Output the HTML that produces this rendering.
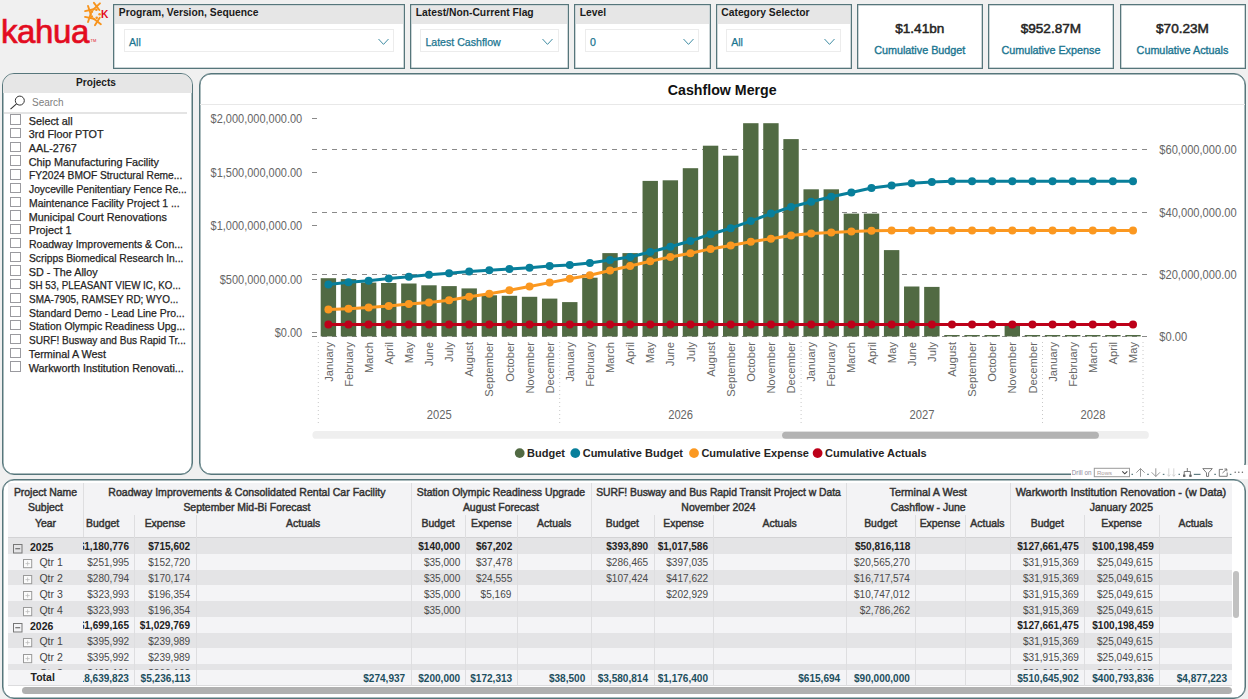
<!DOCTYPE html>
<html><head><meta charset="utf-8"><style>
*{box-sizing:border-box;margin:0;padding:0}
html,body{width:1248px;height:699px;overflow:hidden;background:#f0f0f0;font-family:"Liberation Sans", sans-serif;position:relative}
.slicer{position:absolute;top:4px;height:64.5px;background:#fff;border:1px solid #56767b;box-shadow:inset 0 0 0 0.5px rgba(86,118,123,0.6)}
.sh{position:absolute;left:1px;right:1px;top:1px;height:18px;background:#e6e6e6;font-weight:bold;font-size:10.3px;color:#1b1b1b;padding-left:3.8px;line-height:14px;white-space:nowrap}
.dd{position:absolute;top:23.8px;height:23px;border:1px solid #ececec;background:#fff}
.dd span{position:absolute;left:4px;top:6px;font-size:10.6px;color:#1a7590;line-height:12px;white-space:nowrap;-webkit-text-stroke:0.25px currentColor;}
.chev{position:absolute;right:4.5px;top:8px}
.card{position:absolute;top:3.8px;height:65px;background:#fff;border:1px solid #56767b;box-shadow:inset 0 0 0 0.5px rgba(86,118,123,0.6);text-align:center}
.cv{position:absolute;left:0;right:0;top:16.5px;font-size:13.6px;color:#252423;line-height:15px;-webkit-text-stroke:0.5px #252423}
.cl{position:absolute;left:0;right:0;top:39.5px;font-size:10.8px;color:#1a7590;line-height:13px;white-space:nowrap;-webkit-text-stroke:0.35px #1a7590}
.panel{position:absolute;background:#fff;border:1px solid #56767b;box-shadow:inset 0 0 0 0.5px #56767b;border-radius:12px;overflow:hidden}
.pi{position:absolute;left:7px;height:14px;width:181px;white-space:nowrap}
.pi i{position:absolute;left:0px;top:-0.3px;width:10.6px;height:10.4px;border:1px solid #9a9a9f;background:#fff}
.pi span{position:absolute;left:18.8px;top:0px;font-size:10.8px;line-height:13px;color:#252423;-webkit-text-stroke:0.25px currentColor;}
.rh{position:absolute;font-size:10.5px;line-height:16px;white-space:nowrap}
.cell{position:absolute;height:16px;overflow:hidden}
.cell span{position:absolute;right:5.5px;top:0.5px;font-size:10.6px;line-height:16px;white-space:nowrap;transform:scaleX(0.95);transform-origin:100% 50%}
.hd{position:absolute;text-align:center;font-size:10.45px;color:#333;line-height:12px;white-space:nowrap;overflow:hidden;-webkit-text-stroke:0.45px #333}
</style></head><body>
<div style="position:absolute;left:1px;top:12.2px;font-size:33px;color:#e30b20;letter-spacing:-0.4px;line-height:40px;-webkit-text-stroke:0.7px #e30b20">kahua</div>
<div style="position:absolute;left:90.5px;top:38px;font-size:4px;color:#e30b20;line-height:5px">TM</div>
<svg width="112" height="30" style="position:absolute;left:0;top:0"><circle cx="91.93" cy="11.65" r="1.3" fill="#f7941d"/><circle cx="96.37" cy="9.82" r="1.3" fill="#f7941d"/><circle cx="99.60" cy="14.19" r="1.3" fill="#f7941d"/><circle cx="96.68" cy="17.84" r="1.3" fill="#f7941d"/><circle cx="91.76" cy="16.45" r="1.3" fill="#f7941d"/><line x1="90.81" y1="14.48" x2="88.03" y2="5.92" stroke="#f7941d" stroke-width="1.9" stroke-linecap="round"/><line x1="93.82" y1="9.26" x2="85.02" y2="11.14" stroke="#f7941d" stroke-width="1.9" stroke-linecap="round"/><line x1="93.37" y1="9.50" x2="99.95" y2="3.36" stroke="#f7941d" stroke-width="1.9" stroke-linecap="round"/><line x1="99.37" y1="10.02" x2="93.95" y2="2.84" stroke="#f7941d" stroke-width="1.9" stroke-linecap="round"/><line x1="99.70" y1="17.67" x2="94.94" y2="25.30" stroke="#f7941d" stroke-width="1.9" stroke-linecap="round"/><line x1="93.77" y1="18.71" x2="100.87" y2="24.26" stroke="#f7941d" stroke-width="1.9" stroke-linecap="round"/><line x1="93.82" y1="18.74" x2="85.02" y2="16.86" stroke="#f7941d" stroke-width="1.9" stroke-linecap="round"/><line x1="90.81" y1="13.52" x2="88.03" y2="22.08" stroke="#f7941d" stroke-width="1.9" stroke-linecap="round"/><text x="101" y="18" font-size="10.2" font-weight="bold" fill="#e30b20" font-family='"Liberation Sans", sans-serif'>K</text></svg>
<div class="slicer" style="left:113px;width:291.5px">
<div class="sh">Program, Version, Sequence</div>
<div class="dd" style="left:10px;width:270px"><span>All</span>
<svg class="chev" width="11" height="8" viewBox="0 0 11 8"><polyline points="0.5,1 5.5,6.4 10.5,1" fill="none" stroke="#3f8ca3" stroke-width="1"/></svg></div>
</div>
<div class="slicer" style="left:410px;width:159px">
<div class="sh">Latest/Non-Current Flag</div>
<div class="dd" style="left:9.399999999999977px;width:138.39999999999998px"><span>Latest Cashflow</span>
<svg class="chev" width="11" height="8" viewBox="0 0 11 8"><polyline points="0.5,1 5.5,6.4 10.5,1" fill="none" stroke="#3f8ca3" stroke-width="1"/></svg></div>
</div>
<div class="slicer" style="left:574px;width:136.5px">
<div class="sh">Level</div>
<div class="dd" style="left:10px;width:114.29999999999995px"><span>0</span>
<svg class="chev" width="11" height="8" viewBox="0 0 11 8"><polyline points="0.5,1 5.5,6.4 10.5,1" fill="none" stroke="#3f8ca3" stroke-width="1"/></svg></div>
</div>
<div class="slicer" style="left:715.5px;width:136.0px">
<div class="sh">Category Selector</div>
<div class="dd" style="left:9.700000000000045px;width:114.39999999999998px"><span>All</span>
<svg class="chev" width="11" height="8" viewBox="0 0 11 8"><polyline points="0.5,1 5.5,6.4 10.5,1" fill="none" stroke="#3f8ca3" stroke-width="1"/></svg></div>
</div>
<div class="card" style="left:857px;width:125.5px"><div class="cv">$1.41bn</div><div class="cl">Cumulative Budget</div></div>
<div class="card" style="left:988px;width:125.79999999999995px"><div class="cv">$952.87M</div><div class="cl">Cumulative Expense</div></div>
<div class="card" style="left:1119.5px;width:126.0px"><div class="cv">$70.23M</div><div class="cl">Cumulative Actuals</div></div>
<div class="panel" style="left:2px;top:73px;width:191px;height:402px">
 <div style="position:absolute;left:0;right:0;top:0;height:19px;background:#e6e6e6;text-align:center;font-weight:bold;font-size:10.1px;line-height:17px;color:#1b1b1b;padding-right:3px">Projects</div>
 <div style="position:absolute;left:0.5px;right:5px;top:38.2px;height:2px;background:#e4e4e4"></div>
 <div style="position:absolute;left:29px;top:23.3px;font-size:10px;color:#808080;line-height:12px">Search</div>
 <svg style="position:absolute;left:6px;top:20.5px" width="17" height="15" viewBox="0 0 17 15"><circle cx="10.8" cy="5.6" r="4.5" fill="none" stroke="#333" stroke-width="1"/><line x1="7.5" y1="8.8" x2="1.5" y2="14.2" stroke="#333" stroke-width="1.1"/></svg>
 <div class="pi" style="top:40.60px"><i></i><span style="transform:scaleX(1);transform-origin:0 50%">Select all</span></div><div class="pi" style="top:54.32px"><i></i><span style="transform:scaleX(1);transform-origin:0 50%">3rd Floor PTOT</span></div><div class="pi" style="top:68.04px"><i></i><span style="transform:scaleX(1);transform-origin:0 50%">AAL-2767</span></div><div class="pi" style="top:81.76px"><i></i><span style="transform:scaleX(1);transform-origin:0 50%">Chip Manufacturing Facility</span></div><div class="pi" style="top:95.48px"><i></i><span style="transform:scaleX(0.946);transform-origin:0 50%">FY2024 BMOF Structural Reme...</span></div><div class="pi" style="top:109.20px"><i></i><span style="transform:scaleX(0.952);transform-origin:0 50%">Joyceville Penitentiary Fence Re...</span></div><div class="pi" style="top:122.92px"><i></i><span style="transform:scaleX(0.965);transform-origin:0 50%">Maintenance Facility Project 1 ...</span></div><div class="pi" style="top:136.64px"><i></i><span style="transform:scaleX(1);transform-origin:0 50%">Municipal Court Renovations</span></div><div class="pi" style="top:150.36px"><i></i><span style="transform:scaleX(1);transform-origin:0 50%">Project 1</span></div><div class="pi" style="top:164.08px"><i></i><span style="transform:scaleX(0.972);transform-origin:0 50%">Roadway Improvements &amp; Con...</span></div><div class="pi" style="top:177.80px"><i></i><span style="transform:scaleX(0.953);transform-origin:0 50%">Scripps Biomedical Research In...</span></div><div class="pi" style="top:191.52px"><i></i><span style="transform:scaleX(1);transform-origin:0 50%">SD - The Alloy</span></div><div class="pi" style="top:205.24px"><i></i><span style="transform:scaleX(0.907);transform-origin:0 50%">SH 53, PLEASANT VIEW IC, KO...</span></div><div class="pi" style="top:218.96px"><i></i><span style="transform:scaleX(0.922);transform-origin:0 50%">SMA-7905, RAMSEY RD; WYO...</span></div><div class="pi" style="top:232.68px"><i></i><span style="transform:scaleX(0.964);transform-origin:0 50%">Standard Demo - Lead Line Pro...</span></div><div class="pi" style="top:246.40px"><i></i><span style="transform:scaleX(0.967);transform-origin:0 50%">Station Olympic Readiness Upg...</span></div><div class="pi" style="top:260.12px"><i></i><span style="transform:scaleX(0.933);transform-origin:0 50%">SURF! Busway and Bus Rapid Tr...</span></div><div class="pi" style="top:273.84px"><i></i><span style="transform:scaleX(1);transform-origin:0 50%">Terminal A West</span></div><div class="pi" style="top:287.56px"><i></i><span style="transform:scaleX(1.0);transform-origin:0 50%">Warkworth Institution Renovati...</span></div>
</div>
<div class="panel" style="left:199px;top:73px;width:1046.5px;height:401.5px">
 <div style="position:absolute;left:0;right:0;top:29.5px;height:1.5px;background:#e8e8e8"></div>
 <div style="position:absolute;left:0;right:0;top:8.3px;text-align:center;font-weight:bold;font-size:14.2px;color:#111;line-height:16px">Cashflow Merge</div>
</div>
<svg width="1248" height="699" style="position:absolute;left:0;top:0" font-family='"Liberation Sans", sans-serif'><line x1="312" y1="149.5" x2="1150" y2="149.5" stroke="#8a8a8a" stroke-width="1" stroke-dasharray="5,5"/><line x1="312" y1="212.5" x2="1150" y2="212.5" stroke="#8a8a8a" stroke-width="1" stroke-dasharray="5,5"/><line x1="312" y1="274.5" x2="1150" y2="274.5" stroke="#8a8a8a" stroke-width="1" stroke-dasharray="5,5"/><line x1="312" y1="336.5" x2="1150" y2="336.5" stroke="#8a8a8a" stroke-width="1" stroke-dasharray="5,5"/><line x1="312" y1="118.5" x2="317" y2="118.5" stroke="#8a8a8a" stroke-width="1"/><line x1="312" y1="172.5" x2="317" y2="172.5" stroke="#8a8a8a" stroke-width="1"/><line x1="312" y1="225.5" x2="317" y2="225.5" stroke="#8a8a8a" stroke-width="1"/><line x1="312" y1="279.5" x2="317" y2="279.5" stroke="#8a8a8a" stroke-width="1"/><line x1="312" y1="332.5" x2="317" y2="332.5" stroke="#8a8a8a" stroke-width="1"/><rect x="320.70" y="278.20" width="15.4" height="58.20" fill="#516a43"/><rect x="340.81" y="279.10" width="15.4" height="57.30" fill="#516a43"/><rect x="360.93" y="282.60" width="15.4" height="53.80" fill="#516a43"/><rect x="381.05" y="283.00" width="15.4" height="53.40" fill="#516a43"/><rect x="401.16" y="283.50" width="15.4" height="52.90" fill="#516a43"/><rect x="421.27" y="285.30" width="15.4" height="51.10" fill="#516a43"/><rect x="441.39" y="286.10" width="15.4" height="50.30" fill="#516a43"/><rect x="461.50" y="288.40" width="15.4" height="48.00" fill="#516a43"/><rect x="481.62" y="295.30" width="15.4" height="41.10" fill="#516a43"/><rect x="501.73" y="295.80" width="15.4" height="40.60" fill="#516a43"/><rect x="521.85" y="296.80" width="15.4" height="39.60" fill="#516a43"/><rect x="541.96" y="298.60" width="15.4" height="37.80" fill="#516a43"/><rect x="562.08" y="302.10" width="15.4" height="34.30" fill="#516a43"/><rect x="582.19" y="277.70" width="15.4" height="58.70" fill="#516a43"/><rect x="602.31" y="253.10" width="15.4" height="83.30" fill="#516a43"/><rect x="622.42" y="253.10" width="15.4" height="83.30" fill="#516a43"/><rect x="642.54" y="180.90" width="15.4" height="155.50" fill="#516a43"/><rect x="662.65" y="180.30" width="15.4" height="156.10" fill="#516a43"/><rect x="682.77" y="168.20" width="15.4" height="168.20" fill="#516a43"/><rect x="702.88" y="145.70" width="15.4" height="190.70" fill="#516a43"/><rect x="723.00" y="155.70" width="15.4" height="180.70" fill="#516a43"/><rect x="743.11" y="123.20" width="15.4" height="213.20" fill="#516a43"/><rect x="763.23" y="123.20" width="15.4" height="213.20" fill="#516a43"/><rect x="783.34" y="139.10" width="15.4" height="197.30" fill="#516a43"/><rect x="803.46" y="189.30" width="15.4" height="147.10" fill="#516a43"/><rect x="823.57" y="189.30" width="15.4" height="147.10" fill="#516a43"/><rect x="843.69" y="213.60" width="15.4" height="122.80" fill="#516a43"/><rect x="863.80" y="213.60" width="15.4" height="122.80" fill="#516a43"/><rect x="883.92" y="250.10" width="15.4" height="86.30" fill="#516a43"/><rect x="904.03" y="286.50" width="15.4" height="49.90" fill="#516a43"/><rect x="924.15" y="286.90" width="15.4" height="49.50" fill="#516a43"/><rect x="944.26" y="335.00" width="15.4" height="1.40" fill="#516a43"/><rect x="964.38" y="335.00" width="15.4" height="1.40" fill="#516a43"/><rect x="984.49" y="335.00" width="15.4" height="1.40" fill="#516a43"/><rect x="1004.61" y="323.50" width="15.4" height="12.90" fill="#516a43"/><rect x="1024.72" y="335.00" width="15.4" height="1.40" fill="#516a43"/><rect x="1044.84" y="335.00" width="15.4" height="1.40" fill="#516a43"/><rect x="1064.95" y="335.00" width="15.4" height="1.40" fill="#516a43"/><rect x="1085.07" y="335.00" width="15.4" height="1.40" fill="#516a43"/><rect x="1105.18" y="335.00" width="15.4" height="1.40" fill="#516a43"/><rect x="1125.30" y="335.00" width="15.4" height="1.40" fill="#516a43"/><polyline points="328.40,284.40 348.51,282.30 368.63,280.80 388.75,278.60 408.86,276.80 428.97,274.70 449.09,273.30 469.20,271.50 489.32,270.30 509.43,269.00 529.55,267.70 549.66,266.10 569.78,265.10 589.89,263.10 610.01,260.10 630.12,257.00 650.24,252.00 670.36,246.70 690.47,241.00 710.58,234.20 730.70,228.20 750.81,221.10 770.93,213.60 791.04,207.00 811.16,201.70 831.27,196.70 851.39,192.50 871.50,188.00 891.62,185.40 911.73,183.20 931.85,181.90 951.96,181.20 972.08,181.20 992.19,181.20 1012.31,181.20 1032.42,181.20 1052.54,181.20 1072.65,181.20 1092.77,181.20 1112.88,181.20 1133.00,181.20" fill="none" stroke="#087f9b" stroke-width="3" stroke-linejoin="round"/><circle cx="328.40" cy="284.40" r="4" fill="#087f9b"/><circle cx="348.51" cy="282.30" r="4" fill="#087f9b"/><circle cx="368.63" cy="280.80" r="4" fill="#087f9b"/><circle cx="388.75" cy="278.60" r="4" fill="#087f9b"/><circle cx="408.86" cy="276.80" r="4" fill="#087f9b"/><circle cx="428.97" cy="274.70" r="4" fill="#087f9b"/><circle cx="449.09" cy="273.30" r="4" fill="#087f9b"/><circle cx="469.20" cy="271.50" r="4" fill="#087f9b"/><circle cx="489.32" cy="270.30" r="4" fill="#087f9b"/><circle cx="509.43" cy="269.00" r="4" fill="#087f9b"/><circle cx="529.55" cy="267.70" r="4" fill="#087f9b"/><circle cx="549.66" cy="266.10" r="4" fill="#087f9b"/><circle cx="569.78" cy="265.10" r="4" fill="#087f9b"/><circle cx="589.89" cy="263.10" r="4" fill="#087f9b"/><circle cx="610.01" cy="260.10" r="4" fill="#087f9b"/><circle cx="630.12" cy="257.00" r="4" fill="#087f9b"/><circle cx="650.24" cy="252.00" r="4" fill="#087f9b"/><circle cx="670.36" cy="246.70" r="4" fill="#087f9b"/><circle cx="690.47" cy="241.00" r="4" fill="#087f9b"/><circle cx="710.58" cy="234.20" r="4" fill="#087f9b"/><circle cx="730.70" cy="228.20" r="4" fill="#087f9b"/><circle cx="750.81" cy="221.10" r="4" fill="#087f9b"/><circle cx="770.93" cy="213.60" r="4" fill="#087f9b"/><circle cx="791.04" cy="207.00" r="4" fill="#087f9b"/><circle cx="811.16" cy="201.70" r="4" fill="#087f9b"/><circle cx="831.27" cy="196.70" r="4" fill="#087f9b"/><circle cx="851.39" cy="192.50" r="4" fill="#087f9b"/><circle cx="871.50" cy="188.00" r="4" fill="#087f9b"/><circle cx="891.62" cy="185.40" r="4" fill="#087f9b"/><circle cx="911.73" cy="183.20" r="4" fill="#087f9b"/><circle cx="931.85" cy="181.90" r="4" fill="#087f9b"/><circle cx="951.96" cy="181.20" r="4" fill="#087f9b"/><circle cx="972.08" cy="181.20" r="4" fill="#087f9b"/><circle cx="992.19" cy="181.20" r="4" fill="#087f9b"/><circle cx="1012.31" cy="181.20" r="4" fill="#087f9b"/><circle cx="1032.42" cy="181.20" r="4" fill="#087f9b"/><circle cx="1052.54" cy="181.20" r="4" fill="#087f9b"/><circle cx="1072.65" cy="181.20" r="4" fill="#087f9b"/><circle cx="1092.77" cy="181.20" r="4" fill="#087f9b"/><circle cx="1112.88" cy="181.20" r="4" fill="#087f9b"/><circle cx="1133.00" cy="181.20" r="4" fill="#087f9b"/><polyline points="328.40,309.60 348.51,308.70 368.63,307.60 388.75,306.10 408.86,304.10 428.97,302.40 449.09,300.20 469.20,296.70 489.32,293.70 509.43,290.20 529.55,286.60 549.66,282.60 569.78,278.80 589.89,275.20 610.01,270.50 630.12,266.00 650.24,261.30 670.36,256.90 690.47,253.20 710.58,248.90 730.70,245.40 750.81,241.70 770.93,238.80 791.04,235.60 811.16,233.50 831.27,232.40 851.39,231.60 871.50,230.80 891.62,230.40 911.73,230.40 931.85,230.40 951.96,230.40 972.08,230.40 992.19,230.40 1012.31,230.40 1032.42,230.40 1052.54,230.40 1072.65,230.40 1092.77,230.40 1112.88,230.40 1133.00,230.40" fill="none" stroke="#fb9820" stroke-width="3" stroke-linejoin="round"/><circle cx="328.40" cy="309.60" r="4" fill="#fb9820"/><circle cx="348.51" cy="308.70" r="4" fill="#fb9820"/><circle cx="368.63" cy="307.60" r="4" fill="#fb9820"/><circle cx="388.75" cy="306.10" r="4" fill="#fb9820"/><circle cx="408.86" cy="304.10" r="4" fill="#fb9820"/><circle cx="428.97" cy="302.40" r="4" fill="#fb9820"/><circle cx="449.09" cy="300.20" r="4" fill="#fb9820"/><circle cx="469.20" cy="296.70" r="4" fill="#fb9820"/><circle cx="489.32" cy="293.70" r="4" fill="#fb9820"/><circle cx="509.43" cy="290.20" r="4" fill="#fb9820"/><circle cx="529.55" cy="286.60" r="4" fill="#fb9820"/><circle cx="549.66" cy="282.60" r="4" fill="#fb9820"/><circle cx="569.78" cy="278.80" r="4" fill="#fb9820"/><circle cx="589.89" cy="275.20" r="4" fill="#fb9820"/><circle cx="610.01" cy="270.50" r="4" fill="#fb9820"/><circle cx="630.12" cy="266.00" r="4" fill="#fb9820"/><circle cx="650.24" cy="261.30" r="4" fill="#fb9820"/><circle cx="670.36" cy="256.90" r="4" fill="#fb9820"/><circle cx="690.47" cy="253.20" r="4" fill="#fb9820"/><circle cx="710.58" cy="248.90" r="4" fill="#fb9820"/><circle cx="730.70" cy="245.40" r="4" fill="#fb9820"/><circle cx="750.81" cy="241.70" r="4" fill="#fb9820"/><circle cx="770.93" cy="238.80" r="4" fill="#fb9820"/><circle cx="791.04" cy="235.60" r="4" fill="#fb9820"/><circle cx="811.16" cy="233.50" r="4" fill="#fb9820"/><circle cx="831.27" cy="232.40" r="4" fill="#fb9820"/><circle cx="851.39" cy="231.60" r="4" fill="#fb9820"/><circle cx="871.50" cy="230.80" r="4" fill="#fb9820"/><circle cx="891.62" cy="230.40" r="4" fill="#fb9820"/><circle cx="911.73" cy="230.40" r="4" fill="#fb9820"/><circle cx="931.85" cy="230.40" r="4" fill="#fb9820"/><circle cx="951.96" cy="230.40" r="4" fill="#fb9820"/><circle cx="972.08" cy="230.40" r="4" fill="#fb9820"/><circle cx="992.19" cy="230.40" r="4" fill="#fb9820"/><circle cx="1012.31" cy="230.40" r="4" fill="#fb9820"/><circle cx="1032.42" cy="230.40" r="4" fill="#fb9820"/><circle cx="1052.54" cy="230.40" r="4" fill="#fb9820"/><circle cx="1072.65" cy="230.40" r="4" fill="#fb9820"/><circle cx="1092.77" cy="230.40" r="4" fill="#fb9820"/><circle cx="1112.88" cy="230.40" r="4" fill="#fb9820"/><circle cx="1133.00" cy="230.40" r="4" fill="#fb9820"/><polyline points="328.40,324.60 348.51,324.60 368.63,324.60 388.75,324.60 408.86,324.60 428.97,324.60 449.09,324.60 469.20,324.60 489.32,324.60 509.43,324.60 529.55,324.60 549.66,324.60 569.78,324.60 589.89,324.60 610.01,324.60 630.12,324.60 650.24,324.60 670.36,324.60 690.47,324.60 710.58,324.60 730.70,324.60 750.81,324.60 770.93,324.60 791.04,324.60 811.16,324.60 831.27,324.60 851.39,324.60 871.50,324.60 891.62,324.60 911.73,324.60 931.85,324.60 951.96,324.60 972.08,324.60 992.19,324.60 1012.31,324.60 1032.42,324.60 1052.54,324.60 1072.65,324.60 1092.77,324.60 1112.88,324.60 1133.00,324.60" fill="none" stroke="#bd0019" stroke-width="3" stroke-linejoin="round"/><circle cx="328.40" cy="324.60" r="4" fill="#bd0019"/><circle cx="348.51" cy="324.60" r="4" fill="#bd0019"/><circle cx="368.63" cy="324.60" r="4" fill="#bd0019"/><circle cx="388.75" cy="324.60" r="4" fill="#bd0019"/><circle cx="408.86" cy="324.60" r="4" fill="#bd0019"/><circle cx="428.97" cy="324.60" r="4" fill="#bd0019"/><circle cx="449.09" cy="324.60" r="4" fill="#bd0019"/><circle cx="469.20" cy="324.60" r="4" fill="#bd0019"/><circle cx="489.32" cy="324.60" r="4" fill="#bd0019"/><circle cx="509.43" cy="324.60" r="4" fill="#bd0019"/><circle cx="529.55" cy="324.60" r="4" fill="#bd0019"/><circle cx="549.66" cy="324.60" r="4" fill="#bd0019"/><circle cx="569.78" cy="324.60" r="4" fill="#bd0019"/><circle cx="589.89" cy="324.60" r="4" fill="#bd0019"/><circle cx="610.01" cy="324.60" r="4" fill="#bd0019"/><circle cx="630.12" cy="324.60" r="4" fill="#bd0019"/><circle cx="650.24" cy="324.60" r="4" fill="#bd0019"/><circle cx="670.36" cy="324.60" r="4" fill="#bd0019"/><circle cx="690.47" cy="324.60" r="4" fill="#bd0019"/><circle cx="710.58" cy="324.60" r="4" fill="#bd0019"/><circle cx="730.70" cy="324.60" r="4" fill="#bd0019"/><circle cx="750.81" cy="324.60" r="4" fill="#bd0019"/><circle cx="770.93" cy="324.60" r="4" fill="#bd0019"/><circle cx="791.04" cy="324.60" r="4" fill="#bd0019"/><circle cx="811.16" cy="324.60" r="4" fill="#bd0019"/><circle cx="831.27" cy="324.60" r="4" fill="#bd0019"/><circle cx="851.39" cy="324.60" r="4" fill="#bd0019"/><circle cx="871.50" cy="324.60" r="4" fill="#bd0019"/><circle cx="891.62" cy="324.60" r="4" fill="#bd0019"/><circle cx="911.73" cy="324.60" r="4" fill="#bd0019"/><circle cx="931.85" cy="324.60" r="4" fill="#bd0019"/><circle cx="951.96" cy="324.60" r="4" fill="#bd0019"/><circle cx="972.08" cy="324.60" r="4" fill="#bd0019"/><circle cx="992.19" cy="324.60" r="4" fill="#bd0019"/><circle cx="1012.31" cy="324.60" r="4" fill="#bd0019"/><circle cx="1032.42" cy="324.60" r="4" fill="#bd0019"/><circle cx="1052.54" cy="324.60" r="4" fill="#bd0019"/><circle cx="1072.65" cy="324.60" r="4" fill="#bd0019"/><circle cx="1092.77" cy="324.60" r="4" fill="#bd0019"/><circle cx="1112.88" cy="324.60" r="4" fill="#bd0019"/><circle cx="1133.00" cy="324.60" r="4" fill="#bd0019"/><text transform="translate(332.50,342) rotate(-90)" text-anchor="end" font-size="11.2" fill="#666">January</text><text transform="translate(352.62,342) rotate(-90)" text-anchor="end" font-size="11.2" fill="#666">February</text><text transform="translate(372.73,342) rotate(-90)" text-anchor="end" font-size="11.2" fill="#666">March</text><text transform="translate(392.85,342) rotate(-90)" text-anchor="end" font-size="11.2" fill="#666">April</text><text transform="translate(412.96,342) rotate(-90)" text-anchor="end" font-size="11.2" fill="#666">May</text><text transform="translate(433.07,342) rotate(-90)" text-anchor="end" font-size="11.2" fill="#666">June</text><text transform="translate(453.19,342) rotate(-90)" text-anchor="end" font-size="11.2" fill="#666">July</text><text transform="translate(473.30,342) rotate(-90)" text-anchor="end" font-size="11.2" fill="#666">August</text><text transform="translate(493.42,342) rotate(-90)" text-anchor="end" font-size="11.2" fill="#666">September</text><text transform="translate(513.53,342) rotate(-90)" text-anchor="end" font-size="11.2" fill="#666">October</text><text transform="translate(533.65,342) rotate(-90)" text-anchor="end" font-size="11.2" fill="#666">November</text><text transform="translate(553.76,342) rotate(-90)" text-anchor="end" font-size="11.2" fill="#666">December</text><text transform="translate(573.88,342) rotate(-90)" text-anchor="end" font-size="11.2" fill="#666">January</text><text transform="translate(594.00,342) rotate(-90)" text-anchor="end" font-size="11.2" fill="#666">February</text><text transform="translate(614.11,342) rotate(-90)" text-anchor="end" font-size="11.2" fill="#666">March</text><text transform="translate(634.23,342) rotate(-90)" text-anchor="end" font-size="11.2" fill="#666">April</text><text transform="translate(654.34,342) rotate(-90)" text-anchor="end" font-size="11.2" fill="#666">May</text><text transform="translate(674.46,342) rotate(-90)" text-anchor="end" font-size="11.2" fill="#666">June</text><text transform="translate(694.57,342) rotate(-90)" text-anchor="end" font-size="11.2" fill="#666">July</text><text transform="translate(714.68,342) rotate(-90)" text-anchor="end" font-size="11.2" fill="#666">August</text><text transform="translate(734.80,342) rotate(-90)" text-anchor="end" font-size="11.2" fill="#666">September</text><text transform="translate(754.91,342) rotate(-90)" text-anchor="end" font-size="11.2" fill="#666">October</text><text transform="translate(775.03,342) rotate(-90)" text-anchor="end" font-size="11.2" fill="#666">November</text><text transform="translate(795.14,342) rotate(-90)" text-anchor="end" font-size="11.2" fill="#666">December</text><text transform="translate(815.26,342) rotate(-90)" text-anchor="end" font-size="11.2" fill="#666">January</text><text transform="translate(835.37,342) rotate(-90)" text-anchor="end" font-size="11.2" fill="#666">February</text><text transform="translate(855.49,342) rotate(-90)" text-anchor="end" font-size="11.2" fill="#666">March</text><text transform="translate(875.60,342) rotate(-90)" text-anchor="end" font-size="11.2" fill="#666">April</text><text transform="translate(895.72,342) rotate(-90)" text-anchor="end" font-size="11.2" fill="#666">May</text><text transform="translate(915.83,342) rotate(-90)" text-anchor="end" font-size="11.2" fill="#666">June</text><text transform="translate(935.95,342) rotate(-90)" text-anchor="end" font-size="11.2" fill="#666">July</text><text transform="translate(956.06,342) rotate(-90)" text-anchor="end" font-size="11.2" fill="#666">August</text><text transform="translate(976.18,342) rotate(-90)" text-anchor="end" font-size="11.2" fill="#666">September</text><text transform="translate(996.29,342) rotate(-90)" text-anchor="end" font-size="11.2" fill="#666">October</text><text transform="translate(1016.41,342) rotate(-90)" text-anchor="end" font-size="11.2" fill="#666">November</text><text transform="translate(1036.52,342) rotate(-90)" text-anchor="end" font-size="11.2" fill="#666">December</text><text transform="translate(1056.64,342) rotate(-90)" text-anchor="end" font-size="11.2" fill="#666">January</text><text transform="translate(1076.75,342) rotate(-90)" text-anchor="end" font-size="11.2" fill="#666">February</text><text transform="translate(1096.87,342) rotate(-90)" text-anchor="end" font-size="11.2" fill="#666">March</text><text transform="translate(1116.98,342) rotate(-90)" text-anchor="end" font-size="11.2" fill="#666">April</text><text transform="translate(1137.10,342) rotate(-90)" text-anchor="end" font-size="11.2" fill="#666">May</text><line x1="318.3" y1="342" x2="318.3" y2="425" stroke="#c8c8c8" stroke-width="1" stroke-dasharray="1,3"/><line x1="559.7" y1="342" x2="559.7" y2="425" stroke="#c8c8c8" stroke-width="1" stroke-dasharray="1,3"/><line x1="801.1" y1="342" x2="801.1" y2="425" stroke="#c8c8c8" stroke-width="1" stroke-dasharray="1,3"/><line x1="1042.5" y1="342" x2="1042.5" y2="425" stroke="#c8c8c8" stroke-width="1" stroke-dasharray="1,3"/><line x1="1143" y1="342" x2="1143" y2="425" stroke="#c8c8c8" stroke-width="1" stroke-dasharray="1,3"/><text transform="translate(439.3,419) scale(0.91,1)" text-anchor="middle" font-size="12.3" fill="#666">2025</text><text transform="translate(680.6,419) scale(0.91,1)" text-anchor="middle" font-size="12.3" fill="#666">2026</text><text transform="translate(922,419) scale(0.91,1)" text-anchor="middle" font-size="12.3" fill="#666">2027</text><text transform="translate(1092.9,419) scale(0.91,1)" text-anchor="middle" font-size="12.3" fill="#666">2028</text><text transform="translate(302.2,122.9) scale(0.894,1)" text-anchor="end" font-size="12.3" fill="#666">$2,000,000,000.00</text><text transform="translate(302.2,176.5) scale(0.894,1)" text-anchor="end" font-size="12.3" fill="#666">$1,500,000,000.00</text><text transform="translate(302.2,230.0) scale(0.894,1)" text-anchor="end" font-size="12.3" fill="#666">$1,000,000,000.00</text><text transform="translate(302.2,283.6) scale(0.894,1)" text-anchor="end" font-size="12.3" fill="#666">$500,000,000.00</text><text transform="translate(302.2,337.2) scale(0.894,1)" text-anchor="end" font-size="12.3" fill="#666">$0.00</text><text transform="translate(1159.3,154.1) scale(0.905,1)" font-size="12.3" fill="#666">$60,000,000.00</text><text transform="translate(1159.3,216.5) scale(0.905,1)" font-size="12.3" fill="#666">$40,000,000.00</text><text transform="translate(1159.3,278.7) scale(0.905,1)" font-size="12.3" fill="#666">$20,000,000.00</text><text transform="translate(1159.3,341.0) scale(0.905,1)" font-size="12.3" fill="#666">$0.00</text><rect x="312.4" y="431" width="836.5" height="7.8" rx="3.9" fill="#efefef"/><rect x="782.1" y="431.8" width="316.8" height="7" rx="3.5" fill="#b3b3b3"/><circle cx="519.7" cy="453.1" r="4.9" fill="#516a43"/><text x="527.1" y="456.9" font-size="11" font-weight="bold" fill="#252423">Budget</text><circle cx="575.3" cy="453.1" r="4.9" fill="#087f9b"/><text x="582.7" y="456.9" font-size="11" font-weight="bold" fill="#252423">Cumulative Budget</text><circle cx="694" cy="453.1" r="4.9" fill="#fb9820"/><text x="701.4" y="456.9" font-size="11" font-weight="bold" fill="#252423">Cumulative Expense</text><circle cx="817.6" cy="453.1" r="4.9" fill="#bd0019"/><text x="825" y="456.9" font-size="11" font-weight="bold" fill="#252423">Cumulative Actuals</text></svg>
<div class="panel" style="left:2px;top:479px;width:1243.5px;height:219.5px"></div>
<div style="position:absolute;left:8px;top:483px;width:1224.3px;height:202.5px;overflow:hidden;background:#f4f4f6"><div style="position:absolute;left:0.00px;top:0.00px;width:1224.30px;height:54.00px;background:#f3f3f5"></div><div style="position:absolute;left:0.00px;top:53.80px;width:1224.30px;height:1.00px;background:#d3d3d5"></div><div style="position:absolute;left:0.00px;top:54.80px;width:1224.30px;height:16.10px;background:#e4e4e6"></div><svg style="position:absolute;left:4.800000000000001px;top:61.10px" width="10" height="10" viewBox="0 0 10 10"><rect x="0.5" y="0.5" width="8.5" height="8.5" fill="none" stroke="#777" stroke-width="1"/><line x1="2.3" y1="4.75" x2="7.2" y2="4.75" stroke="#555" stroke-width="1"/></svg><div class="rh" style="left:22px;top:55.80px;font-weight:bold;color:#222">2025</div><div class="cell" style="left:75.00px;width:51.30px;top:54.80px"><span style="font-weight:bold;color:#222">$1,180,776</span></div><div class="cell" style="left:126.30px;width:61.30px;top:54.80px"><span style="font-weight:bold;color:#222">$715,602</span></div><div class="cell" style="left:402.80px;width:54.60px;top:54.80px"><span style="font-weight:bold;color:#222">$140,000</span></div><div class="cell" style="left:457.40px;width:52.00px;top:54.80px"><span style="font-weight:bold;color:#222">$67,202</span></div><div class="cell" style="left:583.00px;width:62.80px;top:54.80px"><span style="font-weight:bold;color:#222">$393,890</span></div><div class="cell" style="left:645.80px;width:59.50px;top:54.80px"><span style="font-weight:bold;color:#222">$1,017,586</span></div><div class="cell" style="left:838.00px;width:69.40px;top:54.80px"><span style="font-weight:bold;color:#222">$50,816,118</span></div><div class="cell" style="left:1002.40px;width:73.80px;top:54.80px"><span style="font-weight:bold;color:#222">$127,661,475</span></div><div class="cell" style="left:1076.20px;width:74.70px;top:54.80px"><span style="font-weight:bold;color:#222">$100,198,459</span></div><div style="position:absolute;left:0.00px;top:70.90px;width:1224.30px;height:15.80px;background:#f4f4f6"></div><svg style="position:absolute;left:14.899999999999999px;top:76.40px" width="10" height="10" viewBox="0 0 10 10"><rect x="0.5" y="0.5" width="8.2" height="8.2" fill="#fbfbfb" stroke="#9a9a9a" stroke-width="1"/><line x1="2.5" y1="4.6" x2="6.7" y2="4.6" stroke="#bbb" stroke-width="0.8"/><line x1="4.6" y1="2.5" x2="4.6" y2="6.7" stroke="#bbb" stroke-width="0.8"/></svg><div class="rh" style="left:31.4px;top:71.40px;color:#444">Qtr 1</div><div class="cell" style="left:75.00px;width:51.30px;top:70.90px"><span style="color:#4a4a4a">$251,995</span></div><div class="cell" style="left:126.30px;width:61.30px;top:70.90px"><span style="color:#4a4a4a">$152,720</span></div><div class="cell" style="left:402.80px;width:54.60px;top:70.90px"><span style="color:#4a4a4a">$35,000</span></div><div class="cell" style="left:457.40px;width:52.00px;top:70.90px"><span style="color:#4a4a4a">$37,478</span></div><div class="cell" style="left:583.00px;width:62.80px;top:70.90px"><span style="color:#4a4a4a">$286,465</span></div><div class="cell" style="left:645.80px;width:59.50px;top:70.90px"><span style="color:#4a4a4a">$397,035</span></div><div class="cell" style="left:838.00px;width:69.40px;top:70.90px"><span style="color:#4a4a4a">$20,565,270</span></div><div class="cell" style="left:1002.40px;width:73.80px;top:70.90px"><span style="color:#4a4a4a">$31,915,369</span></div><div class="cell" style="left:1076.20px;width:74.70px;top:70.90px"><span style="color:#4a4a4a">$25,049,615</span></div><div style="position:absolute;left:0.00px;top:86.70px;width:1224.30px;height:15.70px;background:#e4e4e6"></div><svg style="position:absolute;left:14.899999999999999px;top:92.20px" width="10" height="10" viewBox="0 0 10 10"><rect x="0.5" y="0.5" width="8.2" height="8.2" fill="#fbfbfb" stroke="#9a9a9a" stroke-width="1"/><line x1="2.5" y1="4.6" x2="6.7" y2="4.6" stroke="#bbb" stroke-width="0.8"/><line x1="4.6" y1="2.5" x2="4.6" y2="6.7" stroke="#bbb" stroke-width="0.8"/></svg><div class="rh" style="left:31.4px;top:87.20px;color:#444">Qtr 2</div><div class="cell" style="left:75.00px;width:51.30px;top:86.70px"><span style="color:#4a4a4a">$280,794</span></div><div class="cell" style="left:126.30px;width:61.30px;top:86.70px"><span style="color:#4a4a4a">$170,174</span></div><div class="cell" style="left:402.80px;width:54.60px;top:86.70px"><span style="color:#4a4a4a">$35,000</span></div><div class="cell" style="left:457.40px;width:52.00px;top:86.70px"><span style="color:#4a4a4a">$24,555</span></div><div class="cell" style="left:583.00px;width:62.80px;top:86.70px"><span style="color:#4a4a4a">$107,424</span></div><div class="cell" style="left:645.80px;width:59.50px;top:86.70px"><span style="color:#4a4a4a">$417,622</span></div><div class="cell" style="left:838.00px;width:69.40px;top:86.70px"><span style="color:#4a4a4a">$16,717,574</span></div><div class="cell" style="left:1002.40px;width:73.80px;top:86.70px"><span style="color:#4a4a4a">$31,915,369</span></div><div class="cell" style="left:1076.20px;width:74.70px;top:86.70px"><span style="color:#4a4a4a">$25,049,615</span></div><div style="position:absolute;left:0.00px;top:102.40px;width:1224.30px;height:15.80px;background:#f4f4f6"></div><svg style="position:absolute;left:14.899999999999999px;top:107.90px" width="10" height="10" viewBox="0 0 10 10"><rect x="0.5" y="0.5" width="8.2" height="8.2" fill="#fbfbfb" stroke="#9a9a9a" stroke-width="1"/><line x1="2.5" y1="4.6" x2="6.7" y2="4.6" stroke="#bbb" stroke-width="0.8"/><line x1="4.6" y1="2.5" x2="4.6" y2="6.7" stroke="#bbb" stroke-width="0.8"/></svg><div class="rh" style="left:31.4px;top:102.90px;color:#444">Qtr 3</div><div class="cell" style="left:75.00px;width:51.30px;top:102.40px"><span style="color:#4a4a4a">$323,993</span></div><div class="cell" style="left:126.30px;width:61.30px;top:102.40px"><span style="color:#4a4a4a">$196,354</span></div><div class="cell" style="left:402.80px;width:54.60px;top:102.40px"><span style="color:#4a4a4a">$35,000</span></div><div class="cell" style="left:457.40px;width:52.00px;top:102.40px"><span style="color:#4a4a4a">$5,169</span></div><div class="cell" style="left:645.80px;width:59.50px;top:102.40px"><span style="color:#4a4a4a">$202,929</span></div><div class="cell" style="left:838.00px;width:69.40px;top:102.40px"><span style="color:#4a4a4a">$10,747,012</span></div><div class="cell" style="left:1002.40px;width:73.80px;top:102.40px"><span style="color:#4a4a4a">$31,915,369</span></div><div class="cell" style="left:1076.20px;width:74.70px;top:102.40px"><span style="color:#4a4a4a">$25,049,615</span></div><div style="position:absolute;left:0.00px;top:118.20px;width:1224.30px;height:15.70px;background:#e4e4e6"></div><svg style="position:absolute;left:14.899999999999999px;top:123.70px" width="10" height="10" viewBox="0 0 10 10"><rect x="0.5" y="0.5" width="8.2" height="8.2" fill="#fbfbfb" stroke="#9a9a9a" stroke-width="1"/><line x1="2.5" y1="4.6" x2="6.7" y2="4.6" stroke="#bbb" stroke-width="0.8"/><line x1="4.6" y1="2.5" x2="4.6" y2="6.7" stroke="#bbb" stroke-width="0.8"/></svg><div class="rh" style="left:31.4px;top:118.70px;color:#444">Qtr 4</div><div class="cell" style="left:75.00px;width:51.30px;top:118.20px"><span style="color:#4a4a4a">$323,993</span></div><div class="cell" style="left:126.30px;width:61.30px;top:118.20px"><span style="color:#4a4a4a">$196,354</span></div><div class="cell" style="left:402.80px;width:54.60px;top:118.20px"><span style="color:#4a4a4a">$35,000</span></div><div class="cell" style="left:838.00px;width:69.40px;top:118.20px"><span style="color:#4a4a4a">$2,786,262</span></div><div class="cell" style="left:1002.40px;width:73.80px;top:118.20px"><span style="color:#4a4a4a">$31,915,369</span></div><div class="cell" style="left:1076.20px;width:74.70px;top:118.20px"><span style="color:#4a4a4a">$25,049,615</span></div><div style="position:absolute;left:0.00px;top:133.90px;width:1224.30px;height:15.90px;background:#f4f4f6"></div><svg style="position:absolute;left:4.800000000000001px;top:140.20px" width="10" height="10" viewBox="0 0 10 10"><rect x="0.5" y="0.5" width="8.5" height="8.5" fill="none" stroke="#777" stroke-width="1"/><line x1="2.3" y1="4.75" x2="7.2" y2="4.75" stroke="#555" stroke-width="1"/></svg><div class="rh" style="left:22px;top:134.90px;font-weight:bold;color:#222">2026</div><div class="cell" style="left:75.00px;width:51.30px;top:133.90px"><span style="font-weight:bold;color:#222">$1,699,165</span></div><div class="cell" style="left:126.30px;width:61.30px;top:133.90px"><span style="font-weight:bold;color:#222">$1,029,769</span></div><div class="cell" style="left:1002.40px;width:73.80px;top:133.90px"><span style="font-weight:bold;color:#222">$127,661,475</span></div><div class="cell" style="left:1076.20px;width:74.70px;top:133.90px"><span style="font-weight:bold;color:#222">$100,198,459</span></div><div style="position:absolute;left:0.00px;top:149.80px;width:1224.30px;height:15.60px;background:#e4e4e6"></div><svg style="position:absolute;left:14.899999999999999px;top:155.30px" width="10" height="10" viewBox="0 0 10 10"><rect x="0.5" y="0.5" width="8.2" height="8.2" fill="#fbfbfb" stroke="#9a9a9a" stroke-width="1"/><line x1="2.5" y1="4.6" x2="6.7" y2="4.6" stroke="#bbb" stroke-width="0.8"/><line x1="4.6" y1="2.5" x2="4.6" y2="6.7" stroke="#bbb" stroke-width="0.8"/></svg><div class="rh" style="left:31.4px;top:150.30px;color:#444">Qtr 1</div><div class="cell" style="left:75.00px;width:51.30px;top:149.80px"><span style="color:#4a4a4a">$395,992</span></div><div class="cell" style="left:126.30px;width:61.30px;top:149.80px"><span style="color:#4a4a4a">$239,989</span></div><div class="cell" style="left:1002.40px;width:73.80px;top:149.80px"><span style="color:#4a4a4a">$31,915,369</span></div><div class="cell" style="left:1076.20px;width:74.70px;top:149.80px"><span style="color:#4a4a4a">$25,049,615</span></div><div style="position:absolute;left:0.00px;top:165.40px;width:1224.30px;height:15.70px;background:#f4f4f6"></div><svg style="position:absolute;left:14.899999999999999px;top:170.90px" width="10" height="10" viewBox="0 0 10 10"><rect x="0.5" y="0.5" width="8.2" height="8.2" fill="#fbfbfb" stroke="#9a9a9a" stroke-width="1"/><line x1="2.5" y1="4.6" x2="6.7" y2="4.6" stroke="#bbb" stroke-width="0.8"/><line x1="4.6" y1="2.5" x2="4.6" y2="6.7" stroke="#bbb" stroke-width="0.8"/></svg><div class="rh" style="left:31.4px;top:165.90px;color:#444">Qtr 2</div><div class="cell" style="left:75.00px;width:51.30px;top:165.40px"><span style="color:#4a4a4a">$395,992</span></div><div class="cell" style="left:126.30px;width:61.30px;top:165.40px"><span style="color:#4a4a4a">$239,989</span></div><div class="cell" style="left:1002.40px;width:73.80px;top:165.40px"><span style="color:#4a4a4a">$31,915,369</span></div><div class="cell" style="left:1076.20px;width:74.70px;top:165.40px"><span style="color:#4a4a4a">$25,049,615</span></div><div style="position:absolute;left:0.00px;top:181.10px;width:1224.30px;height:15.70px;background:#e4e4e6"></div><svg style="position:absolute;left:14.899999999999999px;top:186.60px" width="10" height="10" viewBox="0 0 10 10"><rect x="0.5" y="0.5" width="8.2" height="8.2" fill="#fbfbfb" stroke="#9a9a9a" stroke-width="1"/><line x1="2.5" y1="4.6" x2="6.7" y2="4.6" stroke="#bbb" stroke-width="0.8"/><line x1="4.6" y1="2.5" x2="4.6" y2="6.7" stroke="#bbb" stroke-width="0.8"/></svg><div class="rh" style="left:31.4px;top:181.60px;color:#444">Qtr 3</div><div class="cell" style="left:75.00px;width:51.30px;top:181.10px"><span style="color:#4a4a4a">$420,101</span></div><div class="cell" style="left:126.30px;width:61.30px;top:181.10px"><span style="color:#4a4a4a">$266,160</span></div><div class="cell" style="left:1002.40px;width:73.80px;top:181.10px"><span style="color:#4a4a4a">$31,915,369</span></div><div class="cell" style="left:1076.20px;width:74.70px;top:181.10px"><span style="color:#4a4a4a">$25,049,615</span></div><div style="position:absolute;left:0.00px;top:186.50px;width:1224.30px;height:15.60px;background:#f4f4f6"></div><div style="position:absolute;left:0.00px;top:202.00px;width:1224.30px;height:1.00px;background:#dcdcde"></div><div class="rh" style="left:22.5px;top:186.30px;font-weight:bold;color:#222">Total</div><div class="cell" style="left:75.00px;width:51.30px;top:186.30px"><span style="font-weight:bold;color:#1d4f5e">$18,639,823</span></div><div class="cell" style="left:126.30px;width:61.30px;top:186.30px"><span style="font-weight:bold;color:#1d4f5e">$5,236,113</span></div><div class="cell" style="left:187.60px;width:215.20px;top:186.30px"><span style="font-weight:bold;color:#1d4f5e">$274,937</span></div><div class="cell" style="left:402.80px;width:54.60px;top:186.30px"><span style="font-weight:bold;color:#1d4f5e">$200,000</span></div><div class="cell" style="left:457.40px;width:52.00px;top:186.30px"><span style="font-weight:bold;color:#1d4f5e">$172,313</span></div><div class="cell" style="left:509.40px;width:73.60px;top:186.30px"><span style="font-weight:bold;color:#1d4f5e">$38,500</span></div><div class="cell" style="left:583.00px;width:62.80px;top:186.30px"><span style="font-weight:bold;color:#1d4f5e">$3,580,814</span></div><div class="cell" style="left:645.80px;width:59.50px;top:186.30px"><span style="font-weight:bold;color:#1d4f5e">$1,176,400</span></div><div class="cell" style="left:705.30px;width:132.70px;top:186.30px"><span style="font-weight:bold;color:#1d4f5e">$615,694</span></div><div class="cell" style="left:838.00px;width:69.40px;top:186.30px"><span style="font-weight:bold;color:#1d4f5e">$90,000,000</span></div><div class="cell" style="left:1002.40px;width:73.80px;top:186.30px"><span style="font-weight:bold;color:#1d4f5e">$510,645,902</span></div><div class="cell" style="left:1076.20px;width:74.70px;top:186.30px"><span style="font-weight:bold;color:#1d4f5e">$400,793,836</span></div><div class="cell" style="left:1150.90px;width:73.40px;top:186.30px"><span style="font-weight:bold;color:#1d4f5e">$4,877,223</span></div><div style="position:absolute;left:75.00px;top:0.00px;width:1.00px;height:54.00px;background:#dedee0"></div><div style="position:absolute;left:402.80px;top:0.00px;width:1.00px;height:205.00px;background:#dedee0"></div><div style="position:absolute;left:583.00px;top:0.00px;width:1.00px;height:205.00px;background:#dedee0"></div><div style="position:absolute;left:838.00px;top:0.00px;width:1.00px;height:205.00px;background:#dedee0"></div><div style="position:absolute;left:1002.40px;top:0.00px;width:1.00px;height:205.00px;background:#dedee0"></div><div style="position:absolute;left:126.30px;top:32.00px;width:1.00px;height:171.00px;background:#dedee0"></div><div style="position:absolute;left:187.60px;top:32.00px;width:1.00px;height:171.00px;background:#dedee0"></div><div style="position:absolute;left:402.80px;top:32.00px;width:1.00px;height:171.00px;background:#dedee0"></div><div style="position:absolute;left:457.40px;top:32.00px;width:1.00px;height:171.00px;background:#dedee0"></div><div style="position:absolute;left:509.40px;top:32.00px;width:1.00px;height:171.00px;background:#dedee0"></div><div style="position:absolute;left:583.00px;top:32.00px;width:1.00px;height:171.00px;background:#dedee0"></div><div style="position:absolute;left:645.80px;top:32.00px;width:1.00px;height:171.00px;background:#dedee0"></div><div style="position:absolute;left:705.30px;top:32.00px;width:1.00px;height:171.00px;background:#dedee0"></div><div style="position:absolute;left:838.00px;top:32.00px;width:1.00px;height:171.00px;background:#dedee0"></div><div style="position:absolute;left:907.40px;top:32.00px;width:1.00px;height:171.00px;background:#dedee0"></div><div style="position:absolute;left:956.50px;top:32.00px;width:1.00px;height:171.00px;background:#dedee0"></div><div style="position:absolute;left:1002.40px;top:32.00px;width:1.00px;height:171.00px;background:#dedee0"></div><div style="position:absolute;left:1076.20px;top:32.00px;width:1.00px;height:171.00px;background:#dedee0"></div><div style="position:absolute;left:1150.90px;top:32.00px;width:1.00px;height:171.00px;background:#dedee0"></div><div class="hd" style="left:0;width:75px;top:4px">Project Name</div><div class="hd" style="left:0;width:75px;top:19.30000000000001px">Subject</div><div class="hd" style="left:0;width:75px;top:35px">Year</div><div class="hd" style="left:75.00px;width:327.80px;top:4px;transform:scaleX(1.01)">Roadway Improvements &amp; Consolidated Rental Car Facility</div><div class="hd" style="left:75.00px;width:327.80px;top:19.30000000000001px">September Mid-Bi Forecast</div><div class="hd" style="left:402.80px;width:180.20px;top:4px;transform:scaleX(1)">Station Olympic Readiness Upgrade</div><div class="hd" style="left:402.80px;width:180.20px;top:19.30000000000001px">August Forecast</div><div class="hd" style="left:583.00px;width:255.00px;top:4px;transform:scaleX(0.99)">SURF! Busway and Bus Rapid Transit Project w Data</div><div class="hd" style="left:583.00px;width:255.00px;top:19.30000000000001px">November 2024</div><div class="hd" style="left:838.00px;width:164.40px;top:4px;transform:scaleX(1.035)">Terminal A West</div><div class="hd" style="left:838.00px;width:164.40px;top:19.30000000000001px">Cashflow - June</div><div class="hd" style="left:1002.40px;width:221.90px;top:4px;transform:scaleX(1.045)">Warkworth Institution Renovation - (w Data)</div><div class="hd" style="left:1002.40px;width:221.90px;top:19.30000000000001px">January 2025</div><div class="hd" style="left:75.00px;width:39.30px;top:35px">Budget</div><div class="hd" style="left:126.30px;width:61.30px;top:35px">Expense</div><div class="hd" style="left:187.60px;width:215.20px;top:35px">Actuals</div><div class="hd" style="left:402.80px;width:54.60px;top:35px">Budget</div><div class="hd" style="left:457.40px;width:52.00px;top:35px">Expense</div><div class="hd" style="left:509.40px;width:73.60px;top:35px">Actuals</div><div class="hd" style="left:583.00px;width:62.80px;top:35px">Budget</div><div class="hd" style="left:645.80px;width:59.50px;top:35px">Expense</div><div class="hd" style="left:705.30px;width:132.70px;top:35px">Actuals</div><div class="hd" style="left:838.00px;width:69.40px;top:35px">Budget</div><div class="hd" style="left:907.40px;width:49.10px;top:35px">Expense</div><div class="hd" style="left:956.50px;width:45.90px;top:35px">Actuals</div><div class="hd" style="left:1002.40px;width:73.80px;top:35px">Budget</div><div class="hd" style="left:1076.20px;width:74.70px;top:35px">Expense</div><div class="hd" style="left:1150.90px;width:73.40px;top:35px">Actuals</div></div><div style="position:absolute;left:22.3px;top:686.6px;width:1209.4px;height:7.6px;border-radius:3.8px;background:#b0b0b0"></div><div style="position:absolute;left:1233.3px;top:571px;width:6px;height:47px;border-radius:3px;background:#c1c1c1"></div>
<div style="position:absolute;left:1071px;top:465px;width:177px;height:13.5px;background:#fff"></div>
<svg width="1248" height="699" style="position:absolute;left:0;top:0" font-family='"Liberation Sans", sans-serif'>
<g stroke="#5f7d82" stroke-width="1.2">
<line x1="1131.5" y1="474.4" x2="1133" y2="474.4"/><line x1="1147.2" y1="474.4" x2="1148.8" y2="474.4"/>
<line x1="1162.8" y1="474.4" x2="1164.4" y2="474.4"/><line x1="1178.5" y1="474.4" x2="1180" y2="474.4"/>
<line x1="1193.8" y1="474.4" x2="1200.5" y2="474.4"/><line x1="1214.3" y1="474.4" x2="1215.9" y2="474.4"/>
<line x1="1229.8" y1="474.4" x2="1231.4" y2="474.4"/>
</g>
<text x="1071.8" y="475" font-size="6.3" fill="#8a8a9a">Drill on</text>
<rect x="1094.3" y="468.3" width="35.2" height="8.4" fill="#fff" stroke="#9a9a9a" stroke-width="1"/>
<text x="1097" y="475.2" font-size="6" fill="#a89a9a">Rows</text>
<polyline points="1122.3,471.3 1124.8,473.8 1127.3,471.3" fill="none" stroke="#444" stroke-width="1.1"/>
<g stroke="#8c8c8c" stroke-width="0.9" fill="none">
<line x1="1140.5" y1="468.5" x2="1140.5" y2="476.8"/><polyline points="1136.3,472.7 1140.5,468.5 1144.7,472.7"/>
<line x1="1155.8" y1="468.3" x2="1155.8" y2="476.5"/><polyline points="1151.6,472.3 1155.8,476.5 1160,472.3"/>
</g>
<g stroke="#d0d0d0" stroke-width="0.9" fill="none">
<line x1="1168.8" y1="468.3" x2="1168.8" y2="476.3"/><line x1="1173.8" y1="468.3" x2="1173.8" y2="476.3"/>
<polyline points="1167.3,474.5 1168.8,476.3 1170.3,474.5"/><polyline points="1172.3,474.5 1173.8,476.3 1175.3,474.5"/>
</g>
<g stroke="#666" stroke-width="0.85" fill="none">
<line x1="1187.3" y1="468" x2="1187.3" y2="471.5"/><polyline points="1184.2,475 1184.2,471.5 1190.4,471.5 1190.4,475"/>
<rect x="1183.5" y="475" width="1.5" height="1.5" fill="#555"/><rect x="1189.7" y="475" width="1.5" height="1.5" fill="#555"/>
<polyline points="1202.8,468.6 1212.3,468.6 1208.6,472.8 1208.6,476.4 1206.5,476.4 1206.5,472.8 1202.8,468.6"/>
<polyline points="1223,469.4 1219.3,469.4 1219.3,476.3 1227.2,476.3 1227.2,472.5"/><line x1="1222.5" y1="473" x2="1226.8" y2="469"/><polyline points="1224.4,469 1226.8,469 1226.8,471.3"/>
</g>
<g fill="#666"><circle cx="1235.2" cy="472.2" r="0.75"/><circle cx="1238.8" cy="472.2" r="0.75"/><circle cx="1242.4" cy="472.2" r="0.75"/></g>
</svg>
</body></html>
